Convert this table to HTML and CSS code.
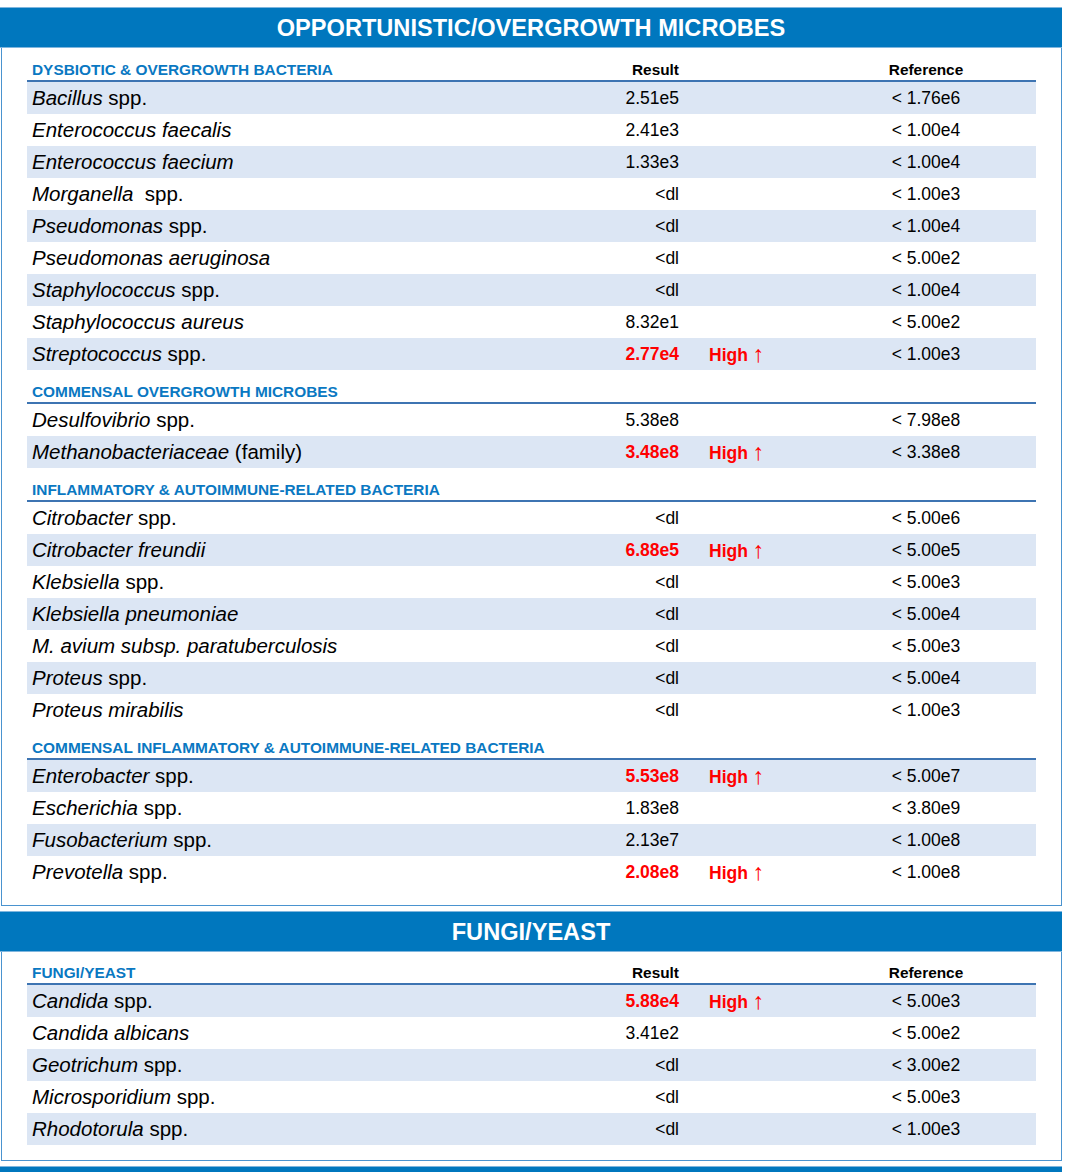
FILE: index.html
```html
<!DOCTYPE html>
<html>
<head>
<meta charset="utf-8">
<link rel="stylesheet" href="styles.css">
</head>
<body>
<section class="panel first-panel">
  <h2 class="band">OPPORTUNISTIC/OVERGROWTH MICROBES</h2>
  <div class="table">
    <div class="row head top"><div class="c name title">DYSBIOTIC &amp; OVERGROWTH BACTERIA</div><div class="c res">Result</div><div class="c flag"></div><div class="c ref">Reference</div></div>
    <div class="row shade"><div class="c name"><i>Bacillus</i> spp.</div><div class="c res">2.51e5</div><div class="c flag"></div><div class="c ref">&lt; 1.76e6</div></div>
    <div class="row"><div class="c name"><i>Enterococcus faecalis</i></div><div class="c res">2.41e3</div><div class="c flag"></div><div class="c ref">&lt; 1.00e4</div></div>
    <div class="row shade"><div class="c name"><i>Enterococcus faecium</i></div><div class="c res">1.33e3</div><div class="c flag"></div><div class="c ref">&lt; 1.00e4</div></div>
    <div class="row"><div class="c name"><i>Morganella</i>&nbsp; spp.</div><div class="c res">&lt;dl</div><div class="c flag"></div><div class="c ref">&lt; 1.00e3</div></div>
    <div class="row shade"><div class="c name"><i>Pseudomonas</i> spp.</div><div class="c res">&lt;dl</div><div class="c flag"></div><div class="c ref">&lt; 1.00e4</div></div>
    <div class="row"><div class="c name"><i>Pseudomonas aeruginosa</i></div><div class="c res">&lt;dl</div><div class="c flag"></div><div class="c ref">&lt; 5.00e2</div></div>
    <div class="row shade"><div class="c name"><i>Staphylococcus</i> spp.</div><div class="c res">&lt;dl</div><div class="c flag"></div><div class="c ref">&lt; 1.00e4</div></div>
    <div class="row"><div class="c name"><i>Staphylococcus aureus</i></div><div class="c res">8.32e1</div><div class="c flag"></div><div class="c ref">&lt; 5.00e2</div></div>
    <div class="row shade"><div class="c name"><i>Streptococcus</i> spp.</div><div class="c res high">2.77e4</div><div class="c flag">High <span class="arrow">↑</span></div><div class="c ref">&lt; 1.00e3</div></div>

    <div class="row head"><div class="c name title">COMMENSAL OVERGROWTH MICROBES</div><div class="c res"></div><div class="c flag"></div><div class="c ref"></div></div>
    <div class="row"><div class="c name"><i>Desulfovibrio</i> spp.</div><div class="c res">5.38e8</div><div class="c flag"></div><div class="c ref">&lt; 7.98e8</div></div>
    <div class="row shade"><div class="c name"><i>Methanobacteriaceae</i> (family)</div><div class="c res high">3.48e8</div><div class="c flag">High <span class="arrow">↑</span></div><div class="c ref">&lt; 3.38e8</div></div>

    <div class="row head"><div class="c name title">INFLAMMATORY &amp; AUTOIMMUNE-RELATED BACTERIA</div><div class="c res"></div><div class="c flag"></div><div class="c ref"></div></div>
    <div class="row"><div class="c name"><i>Citrobacter</i> spp.</div><div class="c res">&lt;dl</div><div class="c flag"></div><div class="c ref">&lt; 5.00e6</div></div>
    <div class="row shade"><div class="c name"><i>Citrobacter freundii</i></div><div class="c res high">6.88e5</div><div class="c flag">High <span class="arrow">↑</span></div><div class="c ref">&lt; 5.00e5</div></div>
    <div class="row"><div class="c name"><i>Klebsiella</i> spp.</div><div class="c res">&lt;dl</div><div class="c flag"></div><div class="c ref">&lt; 5.00e3</div></div>
    <div class="row shade"><div class="c name"><i>Klebsiella pneumoniae</i></div><div class="c res">&lt;dl</div><div class="c flag"></div><div class="c ref">&lt; 5.00e4</div></div>
    <div class="row"><div class="c name"><i>M. avium subsp. paratuberculosis</i></div><div class="c res">&lt;dl</div><div class="c flag"></div><div class="c ref">&lt; 5.00e3</div></div>
    <div class="row shade"><div class="c name"><i>Proteus</i> spp.</div><div class="c res">&lt;dl</div><div class="c flag"></div><div class="c ref">&lt; 5.00e4</div></div>
    <div class="row"><div class="c name"><i>Proteus mirabilis</i></div><div class="c res">&lt;dl</div><div class="c flag"></div><div class="c ref">&lt; 1.00e3</div></div>

    <div class="row head"><div class="c name title">COMMENSAL INFLAMMATORY &amp; AUTOIMMUNE-RELATED BACTERIA</div><div class="c res"></div><div class="c flag"></div><div class="c ref"></div></div>
    <div class="row shade"><div class="c name"><i>Enterobacter</i> spp.</div><div class="c res high">5.53e8</div><div class="c flag">High <span class="arrow">↑</span></div><div class="c ref">&lt; 5.00e7</div></div>
    <div class="row"><div class="c name"><i>Escherichia</i> spp.</div><div class="c res">1.83e8</div><div class="c flag"></div><div class="c ref">&lt; 3.80e9</div></div>
    <div class="row shade"><div class="c name"><i>Fusobacterium</i> spp.</div><div class="c res">2.13e7</div><div class="c flag"></div><div class="c ref">&lt; 1.00e8</div></div>
    <div class="row"><div class="c name"><i>Prevotella</i> spp.</div><div class="c res high">2.08e8</div><div class="c flag">High <span class="arrow">↑</span></div><div class="c ref">&lt; 1.00e8</div></div>
  </div>
</section>

<section class="panel">
  <h2 class="band">FUNGI/YEAST</h2>
  <div class="table">
    <div class="row head"><div class="c name title">FUNGI/YEAST</div><div class="c res">Result</div><div class="c flag"></div><div class="c ref">Reference</div></div>
    <div class="row shade"><div class="c name"><i>Candida</i> spp.</div><div class="c res high">5.88e4</div><div class="c flag">High <span class="arrow">↑</span></div><div class="c ref">&lt; 5.00e3</div></div>
    <div class="row"><div class="c name"><i>Candida albicans</i></div><div class="c res">3.41e2</div><div class="c flag"></div><div class="c ref">&lt; 5.00e2</div></div>
    <div class="row shade"><div class="c name"><i>Geotrichum</i> spp.</div><div class="c res">&lt;dl</div><div class="c flag"></div><div class="c ref">&lt; 3.00e2</div></div>
    <div class="row"><div class="c name"><i>Microsporidium</i> spp.</div><div class="c res">&lt;dl</div><div class="c flag"></div><div class="c ref">&lt; 5.00e3</div></div>
    <div class="row shade"><div class="c name"><i>Rhodotorula</i> spp.</div><div class="c res">&lt;dl</div><div class="c flag"></div><div class="c ref">&lt; 1.00e3</div></div>
  </div>
</section>

<section class="panel">
  <h2 class="band">&nbsp;</h2>
</section>
</body>
</html>
```

FILE: styles.css
```css
html, body {
  margin: 0;
  padding: 0;
  background: #ffffff;
}
body {
  padding-top: 8px;
  font-family: "Liberation Sans", Arial, sans-serif;
  color: #000;
  width: 1062px;
}
.panel {
  border: 1px solid #4a93cf;
  border-top: none;
  margin: 0 0 6px 1px;
  padding: 0 25px 15px 25px;
}
.panel.first-panel {
  padding-bottom: 17px;
}
.band {
  margin: 0 -26px 0 -27px;
  height: 39px;
  background: #0077be;
  color: #ffffff;
  font-size: 23.6px;
  font-weight: bold;
  line-height: 41px;
  text-align: center;
  box-shadow: 0 0 0 1px #7fb6de;
}
.table {
  display: flex;
  flex-direction: column;
}
.row {
  display: grid;
  grid-template-columns: 584px 87px 124px 1fr;
  height: 32px;
  align-items: center;
}
.row.shade {
  background: #dce6f4;
}
.row.head {
  height: 34px;
  align-items: end;
}
.row.head.top {
  height: 35px;
}
.row.head .c {
  border-bottom: 2px solid #3d74b2;
  box-sizing: content-box;
  line-height: 18px;
  display: flex;
  align-items: flex-end;
  padding-bottom: 1px;
  height: 31px;
  font-size: 15.4px;
  font-weight: bold;
}
.row.head.top .c {
  height: 32px;
}
.row.head .res {
  justify-content: flex-end;
}
.row.head .ref {
  justify-content: center;
}
.c {
  white-space: nowrap;
}
.name {
  padding-left: 5px;
  font-size: 20.5px;
}
.name.title {
  color: #0a78c2;
  font-size: 15.4px;
  font-weight: bold;
}
.res {
  text-align: right;
  padding-right: 19px;
  font-size: 17.5px;
}
.res.high {
  color: #ff0000;
  font-weight: bold;
}
.flag {
  padding-left: 11px;
  color: #ff0000;
  font-weight: bold;
  font-size: 17.5px;
}
.arrow {
  font-weight: normal;
  font-size: 23px;
  line-height: 1;
  display: inline-block;
  transform: translateY(1px);
}
.ref {
  text-align: center;
  font-size: 17.5px;
  padding-right: 6px;
}
.panel:last-child {
  padding-bottom: 0;
  margin-bottom: 0;
}
```
